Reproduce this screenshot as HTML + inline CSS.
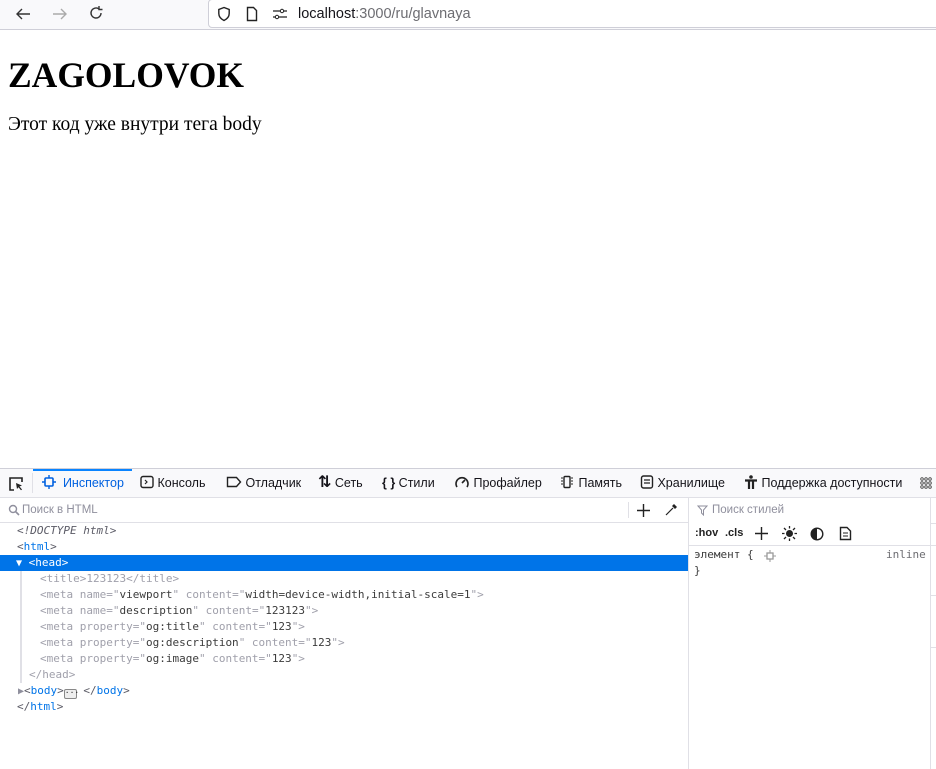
<!DOCTYPE html>
<html><head><meta charset="utf-8"><style>
*{box-sizing:border-box;margin:0;padding:0}
body{width:936px;height:768px;overflow:hidden;background:#fff;position:relative;font-family:"Liberation Sans","DejaVu Sans",sans-serif}
.abs{position:absolute}
#chrome{left:0;top:0;width:936px;height:30px;background:#f9f9fb;border-bottom:1px solid #cfcfd8}
#url{left:208px;top:-1px;width:740px;height:29px;background:#fff;border:1px solid #cfcfd8;border-radius:4px;font-size:14.5px;line-height:29px;color:#15141a}
#page h1{position:absolute;left:8px;top:54px;font:bold 35.5px "Liberation Serif",serif;}
#page p{position:absolute;left:8px;top:114px;font:19.5px "Liberation Serif","DejaVu Serif",serif}
#dt{left:0;top:468px;width:936px;height:300px;border-top:1px solid #cfcfd8;background:#fff}
#tb{left:0;top:0;width:936px;height:29px;background:#f9f9fb;border-bottom:1px solid #e0e0e6;font-size:12.5px;color:#15141a}
.tab{position:absolute;top:0;height:28px;line-height:28px;white-space:nowrap}
.mono{font-family:"DejaVu Sans Mono","Liberation Mono",monospace;font-size:11px}
.ln{position:absolute;height:16px;line-height:16px;white-space:pre;color:#5b5b66}
.t{color:#0074e8}.v{color:#3b3b3b}
</style></head><body>
<div id="chrome" class="abs">
<svg class="abs" style="left:14px;top:6px" width="18" height="16" viewBox="0 0 18 16"><path d="M16 8H3M8 3L3 8l5 5" stroke="#333" stroke-width="1.4" fill="none"/></svg>
<svg class="abs" style="left:51px;top:6px" width="18" height="16" viewBox="0 0 18 16"><path d="M2 8h13M10 3l5 5-5 5" stroke="#aaa" stroke-width="1.4" fill="none"/></svg>
<svg class="abs" style="left:88px;top:5px" width="16" height="16" viewBox="0 0 16 16"><path d="M13 8a5 5 0 1 1-2-4M11 1v3.5h3.5" stroke="#333" stroke-width="1.4" fill="none"/></svg>
<div id="url" class="abs">
<svg class="abs" style="left:8px;top:6px" width="14" height="16" viewBox="0 0 14 16"><path d="M7 1.5L1.8 3.5v4c0 3.3 2.4 5.6 5.2 7 2.8-1.4 5.2-3.7 5.2-7v-4z" stroke="#222" stroke-width="1.4" fill="none"/></svg>
<svg class="abs" style="left:37px;top:6px" width="12" height="16" viewBox="0 0 12 16"><path d="M1.5 1.5h6l3 3v10h-9z" stroke="#222" stroke-width="1.4" fill="none"/></svg>
<svg class="abs" style="left:63px;top:8px" width="16" height="12" viewBox="0 0 16 12"><path d="M1 3h7M12 3h3M1 9h2M7 9h8" stroke="#222" stroke-width="1.2"/><circle cx="10" cy="3" r="1.7" fill="none" stroke="#222"/><circle cx="5" cy="9" r="1.7" fill="none" stroke="#222"/></svg>
<span class="abs" style="left:89px;top:0">localhost<span style="color:#6d6d72">:3000/ru/glavnaya</span></span>
</div></div>
<div id="page"><h1>ZAGOLOVOK</h1><p>Этот код уже внутри тега body</p></div>
<div id="dt" class="abs">
<div id="tb" class="abs">
<svg class="abs" style="left:8px;top:7px" width="16" height="16" viewBox="0 0 16 16"><path d="M6 14H2V2h12v4" stroke="#222" stroke-width="1.6" fill="none"/><path d="M8 7l6 2.5-2.5 1 2.5 3-1 .8-2.5-3L9 13z" fill="#222"/></svg>
<div class="abs" style="left:32px;top:4px;width:1px;height:20px;background:#e0e0e6"></div>
<div class="abs" style="left:33px;top:0;width:99px;height:2px;background:#0a84ff"></div>
<div class="tab" style="left:42px;color:#0061e0"><svg width="14" height="14" viewBox="0 0 14 14" style="vertical-align:-2px"><rect x="3" y="3" width="8" height="8" rx="1" stroke="#0061e0" stroke-width="1.6" fill="none"/><path d="M7 0v3M7 11v3M0 7h3M11 7h3" stroke="#0061e0" stroke-width="1.4"/></svg>&nbsp; Инспектор</div>
<div class="tab" style="left:140px"><svg width="14" height="14" viewBox="0 0 14 14" style="vertical-align:-2px"><rect x="1" y="1.5" width="12" height="11" rx="2" stroke="#222" stroke-width="1.4" fill="none"/><path d="M5 5l2 2-2 2" stroke="#222" stroke-width="1.2" fill="none"/></svg>&nbsp;Консоль</div>
<div class="tab" style="left:226px"><svg width="16" height="14" viewBox="0 0 16 14" style="vertical-align:-2px"><path d="M1.5 2.5h9l4 4.5-4 4.5h-9z" stroke="#222" stroke-width="1.4" fill="none"/></svg>&nbsp;Отладчик</div>
<div class="tab" style="left:318px"><span style="font-size:16px;font-weight:bold">⇅</span>&nbsp;Сеть</div>
<div class="tab" style="left:382px"><b>{ }</b>&nbsp;Стили</div>
<div class="tab" style="left:454px"><svg width="16" height="14" viewBox="0 0 16 14" style="vertical-align:-2px"><path d="M3 12A6 6 0 1 1 13 12" stroke="#222" stroke-width="1.6" fill="none"/><path d="M8 8l3-3" stroke="#222" stroke-width="1.6"/></svg>&nbsp;Профайлер</div>
<div class="tab" style="left:559px"><svg width="16" height="14" viewBox="0 0 16 14" style="vertical-align:-2px"><rect x="5" y="1.5" width="6" height="11" rx="1" stroke="#222" stroke-width="1.4" fill="none"/><path d="M2 3h2M2 6h2M2 9h2M12 3h2M12 6h2M12 9h2" stroke="#222"/></svg>&nbsp;Память</div>
<div class="tab" style="left:640px"><svg width="14" height="14" viewBox="0 0 14 14" style="vertical-align:-2px"><rect x="1.5" y="1" width="11" height="12" rx="2" stroke="#222" stroke-width="1.4" fill="none"/><path d="M4 5h6M4 8h6" stroke="#222" stroke-width="1.2"/></svg>&nbsp;Хранилище</div>
<div class="tab" style="left:744px"><svg width="14" height="14" viewBox="0 0 14 14" style="vertical-align:-2px"><circle cx="7" cy="2" r="1.8" fill="#222"/><path d="M1 5.5h12M5 5v9M9 5v9" stroke="#222" stroke-width="2.2"/></svg>&nbsp;Поддержка доступности</div>
<svg class="abs" style="left:920px;top:8px" width="14" height="12" viewBox="0 0 14 12"><g fill="none" stroke="#444" stroke-width="0.9"><circle cx="2" cy="2" r="1.3"/><circle cx="6" cy="2" r="1.3"/><circle cx="10" cy="2" r="1.3"/><circle cx="2" cy="6" r="1.3"/><circle cx="6" cy="6" r="1.3"/><circle cx="10" cy="6" r="1.3"/><circle cx="2" cy="10" r="1.3"/><circle cx="6" cy="10" r="1.3"/><circle cx="10" cy="10" r="1.3"/></g></svg>
</div>
<div class="abs" style="left:0;top:29px;width:688px;height:25px;border-bottom:1px solid #e0e0e6;font-size:11.5px;color:#8f8f9d;line-height:24px;padding-left:22px">Поиск в HTML
<svg class="abs" style="left:8px;top:6px" width="12" height="12" viewBox="0 0 12 12"><circle cx="5" cy="5" r="3.5" stroke="#8f8f9d" stroke-width="1.4" fill="none"/><path d="M7.5 7.5L11 11" stroke="#8f8f9d" stroke-width="1.6"/></svg>
<div class="abs" style="left:628px;top:4px;width:1px;height:16px;background:#e0e0e6"></div>
<svg class="abs" style="left:637px;top:6px" width="13" height="13" viewBox="0 0 13 13"><path d="M6.5 0v13M0 6.5h13" stroke="#222" stroke-width="1.4"/></svg>
<svg class="abs" style="left:664px;top:5px" width="14" height="14" viewBox="0 0 14 14"><path d="M2 12l7-7" stroke="#222" stroke-width="1.2"/><path d="M10 1l3 3-2 2-3-3z" fill="#222"/></svg>
</div>
<div class="abs" style="left:688px;top:29px;width:1px;height:271px;background:#e0e0e6"></div>
<div class="abs mono" style="left:0;top:54px;width:688px">
<div class="ln" style="top:0;left:17px;font-style:italic">&lt;!DOCTYPE html&gt;</div>
<div class="ln" style="top:16px;left:17px">&lt;<span class="t">html</span>&gt;</div>
<div class="ln" style="top:32px;left:0;width:688px;background:#0074e8;color:#fff;padding-left:16px"><span style="font-size:10px">▼</span> &lt;head&gt;</div>
<div class="abs" style="left:20px;top:48px;width:2px;height:112px;background:#e0e0e6"></div>
<div class="ln" style="top:48px;left:40px;color:#a0a0ab">&lt;title&gt;123123&lt;/title&gt;</div>
<div class="ln" style="top:64px;left:40px;color:#a0a0ab">&lt;meta name="<span class="v">viewport</span>" content="<span class="v">width=device-width,initial-scale=1</span>"&gt;</div>
<div class="ln" style="top:80px;left:40px;color:#a0a0ab">&lt;meta name="<span class="v">description</span>" content="<span class="v">123123</span>"&gt;</div>
<div class="ln" style="top:96px;left:40px;color:#a0a0ab">&lt;meta property="<span class="v">og:title</span>" content="<span class="v">123</span>"&gt;</div>
<div class="ln" style="top:112px;left:40px;color:#a0a0ab">&lt;meta property="<span class="v">og:description</span>" content="<span class="v">123</span>"&gt;</div>
<div class="ln" style="top:128px;left:40px;color:#a0a0ab">&lt;meta property="<span class="v">og:image</span>" content="<span class="v">123</span>"&gt;</div>
<div class="ln" style="top:144px;left:29px;color:#a0a0ab">&lt;/head&gt;</div>
<div class="ln" style="top:160px;left:18px"><span style="font-size:10px;color:#8f8f9d">▶</span>&lt;<span class="t">body</span>&gt;<span style="display:inline-block;width:13px;height:10px;border:1px solid #888;border-radius:2px;background:#eee;font-size:8px;line-height:6px;text-align:center;vertical-align:-1px;color:#222">···</span> &lt;/<span class="t">body</span>&gt;</div>
<div class="ln" style="top:176px;left:17px">&lt;/<span class="t">html</span>&gt;</div>
</div>
<div class="abs" style="left:689px;top:29px;width:242px;height:22px;font-size:11.5px;color:#8f8f9d;line-height:24px;padding-left:23px">Поиск стилей
<svg class="abs" style="left:8px;top:7px" width="11" height="11" viewBox="0 0 11 11"><path d="M1 1h9L6.5 5v5L4.5 8V5z" stroke="#8f8f9d" fill="none"/></svg></div>
<div class="abs" style="left:689px;top:51px;width:242px;height:26px;border-bottom:1px solid #e0e0e6;font-size:11px;font-weight:bold;color:#222;line-height:26px">
<span class="abs" style="left:6px">:hov</span><span class="abs" style="left:36px">.cls</span>
<svg class="abs" style="left:66px;top:7px" width="13" height="13" viewBox="0 0 13 13"><path d="M6.5 0v13M0 6.5h13" stroke="#222" stroke-width="1.4"/></svg>
<svg class="abs" style="left:93px;top:6px" width="15" height="15" viewBox="0 0 15 15"><circle cx="7.5" cy="7.5" r="3.5" fill="#222"/><path d="M7.5 0v2.5M7.5 12.5V15M0 7.5h2.5M12.5 7.5H15M2 2l2 2M11 11l2 2M13 2l-2 2M2 13l2-2" stroke="#222" stroke-width="1.3"/></svg>
<svg class="abs" style="left:121px;top:7px" width="14" height="14" viewBox="0 0 14 14"><circle cx="7" cy="7" r="5.8" stroke="#222" stroke-width="1.4" fill="none"/><path d="M7 1.2a5.8 5.8 0 0 0 0 11.6z" fill="#222"/></svg>
<svg class="abs" style="left:150px;top:6px" width="13" height="15" viewBox="0 0 13 15"><path d="M1.5 1.5h6.5l3.5 3.5v8.5h-10z" stroke="#222" stroke-width="1.4" fill="none"/><path d="M4 7h5M4 10h5" stroke="#222"/></svg>
</div>
<div class="abs mono" style="left:689px;top:77px;width:242px;color:#3b3b3b">
<div class="ln" style="top:1px;left:5px;color:#3b3b3b">элемент {</div>
<svg class="abs" style="left:75px;top:4px" width="12" height="12" viewBox="0 0 12 12"><rect x="3" y="3" width="6" height="6" stroke="#999" stroke-width="1.3" fill="none"/><path d="M6 0v3M6 9v3M0 6h3M9 6h3" stroke="#999"/></svg>
<div class="ln" style="top:1px;left:197px;color:#6d6d72">inline</div>
<div class="ln" style="top:17px;left:5px;color:#3b3b3b">}</div>
</div>
<div class="abs" style="left:930px;top:29px;width:1px;height:271px;background:#e0e0e6"></div>
<div class="abs" style="left:931px;top:54px;width:5px;height:1px;background:#e0e0e6"></div>
<div class="abs" style="left:931px;top:76px;width:5px;height:1px;background:#e0e0e6"></div>
<div class="abs" style="left:931px;top:126px;width:5px;height:1px;background:#e0e0e6"></div>
<div class="abs" style="left:931px;top:178px;width:5px;height:1px;background:#e0e0e6"></div>
</div>
</body></html>
